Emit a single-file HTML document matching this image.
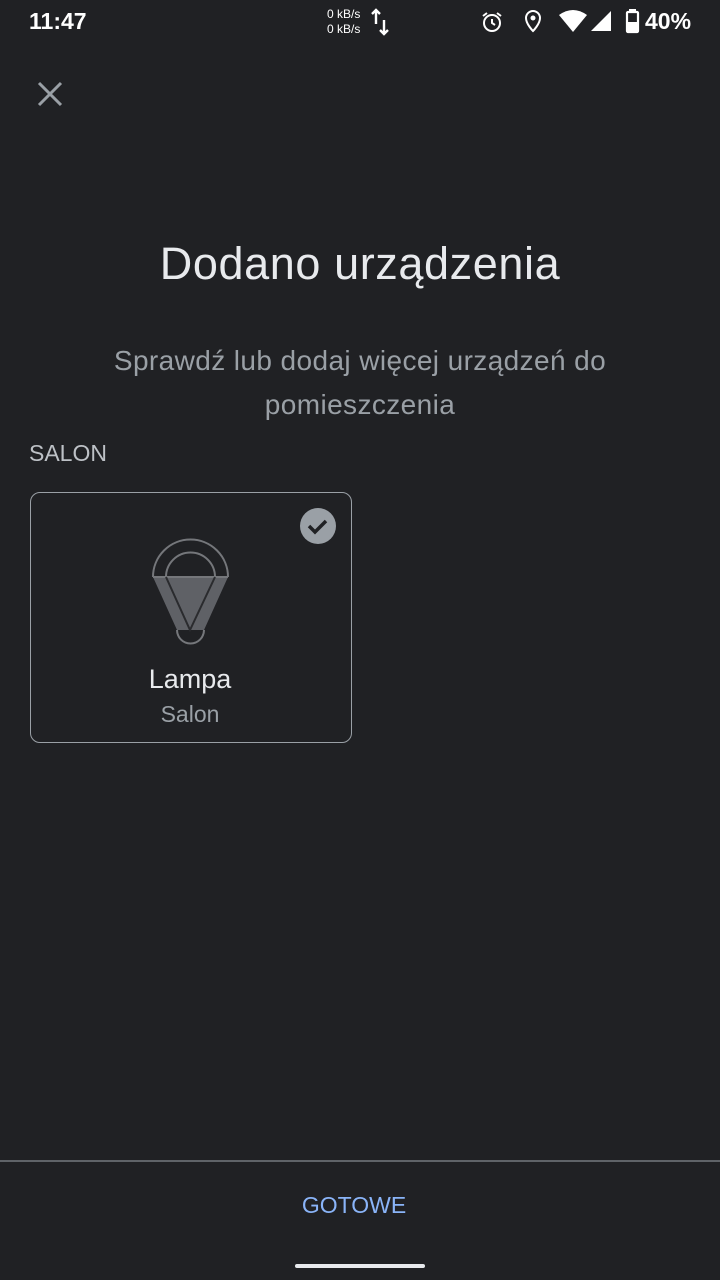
<!DOCTYPE html>
<html><head><meta charset="utf-8"><style>
body{margin:0;width:720px;height:1280px;background:#202124;position:relative;overflow:hidden;font-family:"Liberation Sans","DejaVu Sans",sans-serif;color:#e8eaed}
.a{position:absolute}
</style></head><body>
<div class="a" style="left:29px;top:8px;font-size:23px;color:#fff;font-weight:700">11:47</div>
<div class="a" style="left:327px;top:7px;font-size:12px;line-height:15px;color:#fff">0 kB/s<br>0 kB/s</div>
<svg class="a" style="left:370px;top:8px" width="20" height="28"><path d="M6 2v14M2 6l4-4 4 4M14 12v14M10 22l4 4 4-4" stroke="#fff" stroke-width="2.4" fill="none"/></svg>
<svg class="a" style="left:480px;top:10px" width="24" height="24"><circle cx="12" cy="13" r="8" stroke="#fff" stroke-width="2" fill="none"/><path d="M12 9v4l3 2M3 6l4-3M21 6l-4-3" stroke="#fff" stroke-width="2" fill="none"/></svg>
<svg class="a" style="left:523px;top:9px" width="20" height="24"><path d="M10 22s7-7 7-13a7 7 0 0 0-14 0c0 6 7 13 7 13z" stroke="#fff" stroke-width="2" fill="none"/><circle cx="10" cy="9" r="2.5" fill="#fff"/></svg>
<svg class="a" style="left:558px;top:9px" width="30" height="24"><path d="M1 6Q15-4 29 6L15 23z" fill="#fff"/></svg>
<svg class="a" style="left:589px;top:10px" width="24" height="22"><path d="M22 1V21H2z" fill="#fff"/></svg>
<svg class="a" style="left:624px;top:9px" width="16" height="25"><rect x="3" y="3" width="11" height="20" rx="1" fill="none" stroke="#fff" stroke-width="2.2"/><rect x="5" y="0" width="7" height="3" fill="#fff"/><rect x="3" y="13" width="11" height="10" fill="#fff"/></svg>
<div class="a" style="left:645px;top:8px;font-size:23px;color:#fff;font-weight:700">40%</div>
<svg class="a" style="left:36px;top:80px" width="28" height="28"><path d="M3 3L25 25M25 3L3 25" stroke="#9aa0a6" stroke-width="3"/></svg>
<div class="a" style="left:0;width:720px;top:238px;text-align:center;font-size:45px;letter-spacing:0.6px;color:#e8eaed">Dodano urządzenia</div>
<div class="a" style="left:60px;width:600px;top:339px;text-align:center;font-size:28px;letter-spacing:0.4px;line-height:44px;color:#9aa0a6">Sprawdź lub dodaj więcej urządzeń do pomieszczenia</div>
<div class="a" style="left:29px;top:440px;font-size:23px;color:#bdc1c6">SALON</div>
<div class="a" style="left:30px;top:492px;width:320px;height:249px;border:1.5px solid #9aa0a6;border-radius:10px"></div>
<svg class="a" style="left:130px;top:500px" width="220" height="160">
<circle cx="188" cy="26" r="18" fill="#9aa0a6"/>
<path d="M179 26l6 6 11-11" stroke="#202124" stroke-width="3.5" fill="none"/>
<path d="M23 77L47 130H74L98 77z" fill="#5f6166"/>
<path d="M23 77A37 37 0 0 1 98 77M36 77A24 24 0 0 1 85 77M23 77H98M47 130A13 13 0 0 0 74 130" stroke="#75777b" stroke-width="2" fill="none"/>
<path d="M36 77L60 130L85 77" stroke="#2a2b2e" stroke-width="2" fill="none"/>
</svg>
<div class="a" style="left:30px;width:320px;top:664px;text-align:center;font-size:27px;color:#e8eaed">Lampa</div>
<div class="a" style="left:30px;width:320px;top:701px;text-align:center;font-size:23px;color:#9aa0a6">Salon</div>
<div class="a" style="left:0;top:1160px;width:720px;height:2px;background:#5f6368"></div>
<div class="a" style="left:0;width:708px;top:1192px;text-align:center;font-size:23px;color:#8ab4f8">GOTOWE</div>
<div class="a" style="left:295px;top:1264px;width:130px;height:4px;border-radius:2px;background:#e8eaed"></div>
</body></html>
